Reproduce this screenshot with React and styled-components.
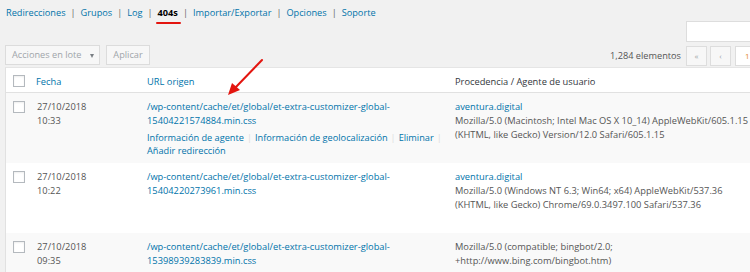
import React from 'react';
import styled, { createGlobalStyle } from 'styled-components';

const GlobalStyle = createGlobalStyle`
  html, body {
    margin: 0;
    padding: 0;
    width: 750px;
    height: 272px;
    overflow: hidden;
    background: #f1f1f1;
  }
  body {
    font-family: "Open Sans", "Liberation Sans", sans-serif;
    font-size: 9.3px;
    color: #555;
  }
`;

const Page = styled.div`
  position: relative;
  width: 750px;
  height: 272px;
  overflow: hidden;
`;

const SubNav = styled.ul`
  display: flex;
  list-style: none;
  margin: 0;
  padding: 6px 0 0 6px;
  height: 21px;
  box-sizing: border-box;
  font-size: 9.2px;
  line-height: 14px;
  color: #555;
`;

const NavItem = styled.li`
  display: flex;
`;

const NavLink = styled.a`
  position: relative;
  color: ${p => (p.$current ? '#000' : '#0073aa')};
  font-weight: ${p => (p.$current ? 700 : 400)};
  text-decoration: none;

  ${p => p.$current && `
    &::after {
      content: '';
      position: absolute;
      left: -2px;
      right: -3px;
      bottom: -3px;
      height: 2px;
      border-radius: 1px;
      background: #e3150f;
    }
  `}
`;

const NavSep = styled.span`
  padding: 0 5px;
  color: #666;
`;

const SearchRow = styled.div`
  display: flex;
  justify-content: flex-end;
  height: 21px;
`;

const SearchSlot = styled.div`
  flex: 0 0 64px;
  min-width: 0;
`;

const SearchInput = styled.div`
  width: 100px;
  height: 21px;
  box-sizing: border-box;
  background: #fff;
  border: 1px solid #ddd;
`;

const TableNav = styled.div`
  display: flex;
  align-items: center;
  height: 21px;
  margin-top: 2px;
  padding-left: 5px;
`;

const BulkSelect = styled.div`
  position: relative;
  width: 95px;
  height: 20px;
  box-sizing: border-box;
  padding-left: 6px;
  display: flex;
  align-items: center;
  background: #f7f7f7;
  border: 1px solid #dcdcdc;
  color: #a0a5aa;
  font-size: 9.2px;

  &::after {
    content: '';
    position: absolute;
    right: 5px;
    top: 8px;
    border-left: 2.5px solid transparent;
    border-right: 2.5px solid transparent;
    border-top: 4px solid #7a7f84;
  }
`;

const ApplyButton = styled.div`
  margin-left: 6px;
  width: 44px;
  height: 20px;
  box-sizing: border-box;
  display: flex;
  align-items: center;
  justify-content: center;
  background: #f7f7f7;
  border: 1px solid #dcdcdc;
  color: #a0a5aa;
  font-size: 9.2px;
`;

const Count = styled.span`
  margin-left: auto;
  margin-right: 5px;
  color: #555;
  font-size: 9.2px;
  padding-top: 2px;
`;

const PagerSlot = styled.div`
  flex: 0 0 64px;
  min-width: 0;
  display: flex;
  gap: 3px;
  margin-top: 2px;
`;

const PageButton = styled.div`
  flex: 0 0 auto;
  width: ${p => p.$w || 21}px;
  height: 20px;
  box-sizing: border-box;
  display: flex;
  align-items: center;
  justify-content: ${p => (p.$input ? 'flex-start' : 'center')};
  padding-left: ${p => (p.$input ? 9 : 0)}px;
  margin-left: ${p => (p.$input ? 1 : 0)}px;
  background: ${p => (p.$input ? '#fff' : '#f7f7f7')};
  border: 1px solid #ddd;
  color: ${p => (p.$input ? '#e48a2f' : '#a0a5aa')};
  font-size: 8px;
`;

const Table = styled.div`
  margin: 2px 0 0 5px;
  width: 775px;
  border-left: 1px solid #e1e1e1;
  border-top: 1px solid #e5e5e5;
  box-sizing: border-box;
  background: #fff;
`;

const Row = styled.div`
  display: grid;
  grid-template-columns: 25px 109px 308px 1fr;
  background: ${p => (p.$alt ? '#f9f9f9' : '#fff')};
  border-bottom: ${p => (p.$head ? '1px solid #e1e1e1' : 'none')};
  height: ${p => (p.$head ? 25 : 70)}px;
  box-sizing: border-box;
  line-height: 14px;
`;

const Cell = styled.div`
  min-width: 0;
  padding: 7px 7px 0;
  padding-left: ${p => p.$pl ?? 7}px;
`;

const CheckCell = styled.div`
  padding-left: 7px;
  padding-top: ${p => (p.$head ? 7 : 8)}px;
`;

const Checkbox = styled.span`
  display: block;
  width: 12px;
  height: 12px;
  box-sizing: border-box;
  background: #fff;
  border: 1px solid #b4b9be;
  box-shadow: inset 0 1px 2px rgba(0, 0, 0, 0.07);
`;

const HeadLink = styled.a`
  color: #0073aa;
  text-decoration: none;
`;

const HeadText = styled.span`
  color: #32373c;
`;

const Line = styled.div`
  color: ${p => (p.$link ? '#0073aa' : '#555')};
  white-space: nowrap;
`;

const RowActions = styled.div`
  padding-top: 3px;
  line-height: 13px;
  font-size: 9.2px;
  color: #0073aa;
  visibility: ${p => (p.$hidden ? 'hidden' : 'visible')};
  white-space: nowrap;
`;

const ActionSep = styled.span`
  color: #ddd;
  padding: 0 3px;
`;

const Arrow = styled.svg`
  position: absolute;
  left: 222px;
  top: 56px;
  pointer-events: none;
`;

const navItems = ['Redirecciones', 'Grupos', 'Log', '404s', 'Importar/Exportar', 'Opciones', 'Soporte'];

const rows = [
  {
    date: '27/10/2018',
    time: '10:33',
    url: ['/wp-content/cache/et/global/et-extra-customizer-global-', '15404221574884.min.css'],
    referrer: 'aventura.digital',
    agent: ['Mozilla/5.0 (Macintosh; Intel Mac OS X 10_14) AppleWebKit/605.1.15', '(KHTML, like Gecko) Version/12.0 Safari/605.1.15'],
    showActions: true,
  },
  {
    date: '27/10/2018',
    time: '10:22',
    url: ['/wp-content/cache/et/global/et-extra-customizer-global-', '15404220273961.min.css'],
    referrer: 'aventura.digital',
    agent: ['Mozilla/5.0 (Windows NT 6.3; Win64; x64) AppleWebKit/537.36', '(KHTML, like Gecko) Chrome/69.0.3497.100 Safari/537.36'],
  },
  {
    date: '27/10/2018',
    time: '09:35',
    url: ['/wp-content/cache/et/global/et-extra-customizer-global-', '15398939283839.min.css'],
    referrer: null,
    agent: ['Mozilla/5.0 (compatible; bingbot/2.0;', '+http://www.bing.com/bingbot.htm)'],
  },
];

function Actions({ hidden }) {
  return (
    <RowActions $hidden={hidden}>
      <div>
        Información de agente<ActionSep>|</ActionSep>Información de geolocalización
        <ActionSep>|</ActionSep>Eliminar<ActionSep>|</ActionSep>
      </div>
      <div>Añadir redirección</div>
    </RowActions>
  );
}

export default function App() {
  return (
    <Page>
      <GlobalStyle />
      <SubNav>
        {navItems.map((item, i) => (
          <NavItem key={item}>
            <NavLink $current={item === '404s'}>{item}</NavLink>
            {i < navItems.length - 1 && <NavSep>|</NavSep>}
          </NavItem>
        ))}
      </SubNav>

      <SearchRow>
        <SearchSlot>
          <SearchInput />
        </SearchSlot>
      </SearchRow>

      <TableNav>
        <BulkSelect>Acciones en lote</BulkSelect>
        <ApplyButton>Aplicar</ApplyButton>
        <Count>1,284 elementos</Count>
        <PagerSlot>
          <PageButton>«</PageButton>
          <PageButton>‹</PageButton>
          <PageButton $input $w={30}>1</PageButton>
        </PagerSlot>
      </TableNav>

      <Table>
        <Row $head>
          <CheckCell $head><Checkbox /></CheckCell>
          <Cell $head $pl={5}><HeadLink>Fecha</HeadLink></Cell>
          <Cell $head><HeadLink>URL origen</HeadLink></Cell>
          <Cell $head><HeadText>Procedencia / Agente de usuario</HeadText></Cell>
        </Row>
        {rows.map((r, i) => (
          <Row key={i} $alt={i % 2 === 0}>
            <CheckCell><Checkbox /></CheckCell>
            <Cell $pl={6}>
              <Line>{r.date}</Line>
              <Line>{r.time}</Line>
            </Cell>
            <Cell>
              {r.url.map(l => <Line key={l} $link>{l}</Line>)}
              <Actions hidden={!r.showActions} />
            </Cell>
            <Cell>
              {r.referrer && <Line $link>{r.referrer}</Line>}
              {r.agent.map(l => <Line key={l}>{l}</Line>)}
            </Cell>
          </Row>
        ))}
      </Table>

      <Arrow width="46" height="44" viewBox="0 0 46 44">
        <line x1="40" y1="4" x2="13" y2="32" stroke="#e3150f" strokeWidth="2" strokeLinecap="round" />
        <polygon points="6,39 10,27 18,34" fill="#e3150f" />
      </Arrow>
    </Page>
  );
}
